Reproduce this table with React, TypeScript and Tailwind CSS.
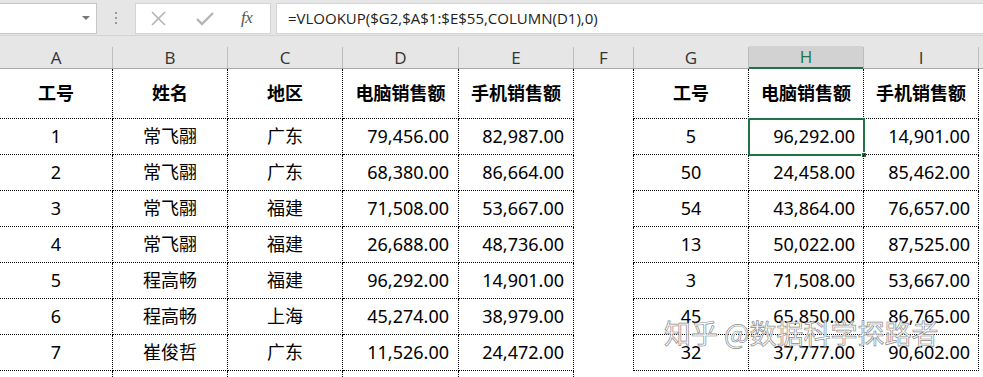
const cols = ["A", "B", "C", "D", "E", "F", "G", "H", "I", ""];

const left = [
  ["1", "常飞翮", "广东", "79,456.00", "82,987.00"],
  ["2", "常飞翮", "广东", "68,380.00", "86,664.00"],
  ["3", "常飞翮", "福建", "71,508.00", "53,667.00"],
  ["4", "常飞翮", "福建", "26,688.00", "48,736.00"],
  ["5", "程高畅", "福建", "96,292.00", "14,901.00"],
  ["6", "程高畅", "上海", "45,274.00", "38,979.00"],
  ["7", "崔俊哲", "广东", "11,526.00", "24,472.00"],
];

const right = [
  ["5", "96,292.00", "14,901.00"],
  ["50", "24,458.00", "85,462.00"],
  ["54", "43,864.00", "76,657.00"],
  ["13", "50,022.00", "87,525.00"],
  ["3", "71,508.00", "53,667.00"],
  ["45", "65,850.00", "86,765.00"],
  ["32", "37,777.00", "90,602.00"],
];

const cell = "border-r border-b border-dotted border-black flex items-center";
const gridCols =
  "grid grid-cols-[113px_115px_115px_116px_115px_60px_115px_115px_115px_1fr]";

function FormulaBar() {
  return (
    <div className="h-[36px] bg-[#e6e6e6] border-b border-[#d4d4d4] flex items-center gap-0 pt-[1px]">
      <div className="w-[97px] h-[31px] bg-white border border-[#c6c6c6] border-l-0 flex items-center justify-end pr-[6px]">
        <svg width="8" height="4" viewBox="0 0 8 4">
          <path d="M0 0h8L4 4z" fill="#777" />
        </svg>
      </div>
      <div className="w-[38px] flex flex-col items-center gap-[3px]">
        <span className="w-[2px] h-[2px] bg-[#9a9a9a]" />
        <span className="w-[2px] h-[2px] bg-[#9a9a9a]" />
        <span className="w-[2px] h-[2px] bg-[#9a9a9a]" />
      </div>
      <div className="w-[136px] h-[31px] bg-white border border-[#d4d4d4] flex items-center">
        <svg className="ml-[14px]" width="17" height="17" viewBox="0 0 17 17">
          <path d="M2 2L15 15M15 2L2 15" stroke="#b4b4b4" strokeWidth="1.6" />
        </svg>
        <svg className="ml-[29px]" width="18" height="17" viewBox="0 0 18 17">
          <path d="M1 9l5 5L17 3" stroke="#b4b4b4" strokeWidth="2.4" fill="none" />
        </svg>
        <span className="ml-[27px] font-['Liberation_Serif',serif] italic text-[17px] text-[#555] tracking-tight">
          fx
        </span>
      </div>
      <div className="ml-[5px] flex-1 h-[31px] bg-white border border-[#d4d4d4] border-r-0 flex items-center pl-[11px] font-['Open_Sans',sans-serif] text-[15px] text-[#222]">
        =VLOOKUP($G2,$A$1:$E$55,COLUMN(D1),0)
      </div>
    </div>
  );
}

function ColumnHeaders() {
  return (
    <div className={`${gridCols} h-[33px] bg-[#e6e6e6] border-b border-[#a8a8a8]`}>
      {cols.map((c, i) => {
        const sel = c === "H";
        return (
          <div key={i} className="flex items-end">
            <div
              className={`flex-1 flex items-end ${sel ? "bg-[#d2d2d2] border-b-2 border-[#217346] -mb-px h-[23px]" : ""}`}
            >
              <span
                className={`flex-1 h-[21px] flex items-center justify-center font-['Open_Sans',sans-serif] text-[17px] ${sel ? "text-[#217346]" : "text-[#333]"}`}
              >
                {c}
              </span>
            </div>
            {c !== "" && <span className="w-px h-[21px] bg-[#bdbdbd]" />}
          </div>
        );
      })}
    </div>
  );
}

export default function App() {
  const headL = ["工号", "姓名", "地区", "电脑销售额", "手机销售额"];
  const headR = ["工号", "电脑销售额", "手机销售额"];
  return (
    <div className="w-[983px] h-[377px] overflow-hidden bg-white relative font-['Noto_Sans','Noto_Sans_CJK_SC',sans-serif] text-black">
      <FormulaBar />
      <ColumnHeaders />
      <div className={`${gridCols} grid-rows-[50px_repeat(7,36px)_36px]`}>
        {/* header row */}
        {headL.map((h, i) => (
          <div key={"hl" + i} className={`${cell} justify-center font-bold text-[18px]`}>
            {h}
          </div>
        ))}
        <div className="border-r border-dotted border-black" />
        {headR.map((h, i) => (
          <div key={"hr" + i} className={`${cell} justify-center font-bold text-[18px]`}>
            {h}
          </div>
        ))}
        <div />

        {left.map((r, ri) => {
          const rr = right[ri];
          return [
            ...r.map((v, ci) => (
              <div
                key={`l${ri}-${ci}`}
                className={`${cell} text-[18px] ${ci >= 3 ? "justify-end pr-[9px]" : "justify-center"}`}
              >
                {v}
              </div>
            )),
            <div key={`f${ri}`} className="border-r border-dotted border-black" />,
            ...rr.map((v, ci) => (
              <div
                key={`r${ri}-${ci}`}
                className={`${cell} relative text-[18px] ${ci >= 1 ? "justify-end pr-[8px]" : "justify-center"}`}
              >
                {v}
                {ri === 0 && ci === 1 && (
                  <div className="absolute -left-px -top-px w-[117px] h-[38px] border-2 border-[#217346]">
                    <span className="absolute -right-[4px] -bottom-[4px] w-[6px] h-[6px] bg-[#217346] border border-white" />
                  </div>
                )}
              </div>
            )),
            <div key={`j${ri}`} />,
          ];
        })}

        {/* partial row 9 */}
        {[0, 1, 2, 3, 4].map((i) => (
          <div key={"b" + i} className="border-r border-dotted border-black" />
        ))}
        <div />
        <div />
        <div />
        <div />
        <div />
      </div>

      <div className="absolute left-[664px] top-[315px] text-[27px] leading-[36px] text-white/85 [-webkit-text-stroke:0.7px_#8c8c8c] font-['Noto_Sans_CJK_SC',sans-serif] whitespace-nowrap">
        知乎 @数据科学探路者
      </div>
    </div>
  );
}
